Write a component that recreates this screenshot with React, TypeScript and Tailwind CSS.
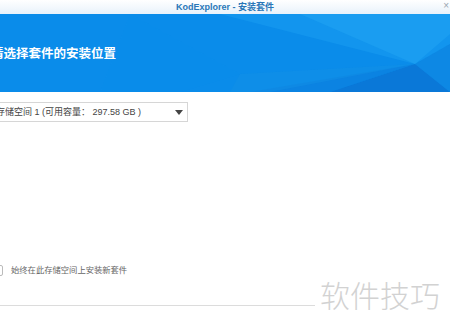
const Banner = () => (
    <div className="relative h-[78px] w-full overflow-hidden bg-[#0a8cea]">
        <svg className="absolute inset-0" width="450" height="78" viewBox="0 0 450 78">
            <polygon points="220,0 450,0 450,30 415,50" fill="#1a9cf0" opacity="0.55" />
            <polygon points="300,0 415,50 450,20 450,0" fill="#22a6f4" opacity="0.5" />
            <polygon points="415,50 330,78 450,78" fill="#0a6fd0" opacity="0.7" />
            <polygon points="415,50 250,78 330,78" fill="#0c7ddc" opacity="0.6" />
            <polygon points="415,50 450,30 450,78" fill="#0f86e0" opacity="0.6" />
            <polygon points="240,60 415,50 270,78 230,78" fill="#1190e6" opacity="0.5" />
            <polygon points="130,0 240,60 180,78 100,78" fill="#0b90ec" opacity="0.3" />
        </svg>
        <h1 className="relative ml-[-9px] mt-[34px] text-[12.5px] font-bold leading-none text-white">
            请选择套件的安装位置
        </h1>
    </div>
);

export default function App() {
    return (
        <div
            className="relative h-[329px] w-[450px] overflow-hidden bg-white"
            style={{ fontFamily: '"Liberation Sans", "Noto Sans CJK SC", sans-serif' }}
        >
            <div className="relative flex h-[14px] items-center justify-center bg-gradient-to-b from-white to-[#e8f2fb]">
                <span className="text-[9px] font-bold leading-none text-[#2a77b8]">KodExplorer - 安装套件</span>
                <span className="absolute right-[1px] top-[1px] text-[10px] leading-none text-[#9aa6b0]">×</span>
            </div>
            <Banner />
            <div className="ml-[-8px] mt-[10px] flex h-[20px] w-[196px] items-center justify-between border border-[#d6d6d6] pl-[3px] pr-[3px]">
                <span className="text-[9px] leading-none text-[#444]">存储空间 1 (可用容量： 297.58 GB )</span>
                <svg width="8" height="5" viewBox="0 0 8 5" className="mr-[1px]">
                    <polygon points="0,0 8,0 4,5" fill="#444" />
                </svg>
            </div>
            <div className="mt-[143px] flex items-center gap-[8px] ml-[-8px]">
                <div className="h-[11px] w-[11px] rounded-[2px] border border-[#bbb] bg-white" />
                <span className="text-[8.3px] leading-none text-[#666]">始终在此存储空间上安装新套件</span>
            </div>
            <div className="mt-[3px] flex items-end">
                <div className="mb-[3px] h-px w-[315px] bg-[#dcdcdc]" />
                <span
                    className="ml-[5px] text-[30px] font-light leading-none text-[#d2d2d2]"
                    style={{ fontFamily: '"Noto Sans CJK SC", sans-serif' }}
                >
                    软件技巧
                </span>
            </div>
        </div>
    );
}
